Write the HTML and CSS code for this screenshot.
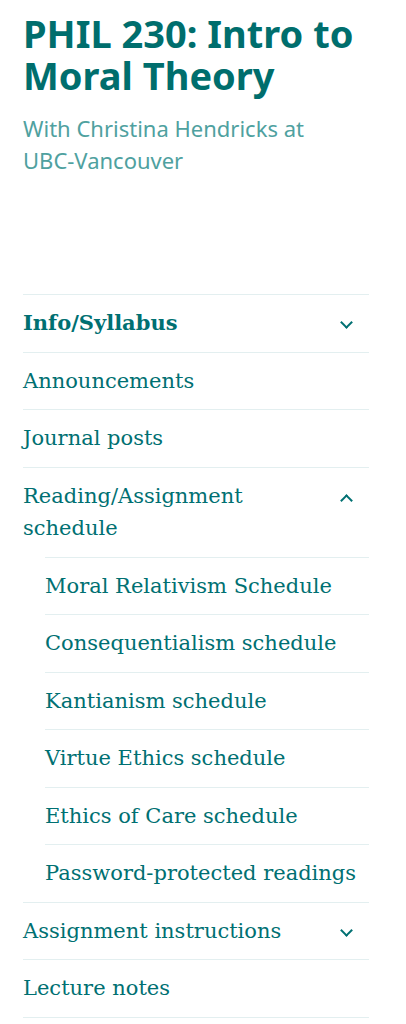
FILE: index.html
```html
<!DOCTYPE html>
<html lang="en">
<head>
  <meta charset="UTF-8" />
  <title>PHIL 230: Intro to Moral Theory</title>
  <link rel="stylesheet" href="styles.css">
</head>
<body>

<div class="site-sidebar">
  <header class="site-header">
    <h1 class="site-title">PHIL 230: Intro to Moral Theory</h1>
    <p class="site-desc">With Christina Hendricks at UBC-Vancouver</p>
  </header>

  <!-- Main menu -->
  <nav class="main-nav">
    <ul class="menu">
      <li class="menu-item current has-children">
        <a href="#">Info/Syllabus</a>
        <span class="toggle down"></span>
      </li>
      <li class="menu-item"><a href="#">Announcements</a></li>
      <li class="menu-item"><a href="#">Journal posts</a></li>
      <li class="menu-item has-children">
        <a href="#">Reading/Assignment schedule</a>
        <span class="toggle up"></span>
        <ul class="sub-menu">
          <li class="menu-item"><a href="#">Moral Relativism Schedule</a></li>
          <li class="menu-item"><a href="#">Consequentialism schedule</a></li>
          <li class="menu-item"><a href="#">Kantianism schedule</a></li>
          <li class="menu-item"><a href="#">Virtue Ethics schedule</a></li>
          <li class="menu-item"><a href="#">Ethics of Care schedule</a></li>
          <li class="menu-item"><a href="#">Password-protected readings</a></li>
        </ul>
      </li>
      <li class="menu-item has-children">
        <a href="#">Assignment instructions</a>
        <span class="toggle down"></span>
      </li>
      <li class="menu-item"><a href="#">Lecture notes</a></li>
    </ul>
  </nav>
</div>

</body>
</html>
```

FILE: styles.css
```css
:root {
  --main-color: #006e6d;
  --link-color: #007072;
  --desc-color: #4fa19f;
  --line-color: #e3eff0;
}

body {
  margin: 0;
  padding: 0;
  background: #fff;
}

.site-sidebar {
  padding: 0 37px 0 23px;
}

.site-header {
  padding-top: 12px;
  margin-bottom: 118px;
}

.site-title {
  font-family: "Noto Sans", sans-serif;
  font-weight: 700;
  font-size: 38px;
  line-height: 42px;
  color: var(--main-color);
  margin: 0;
}

.site-desc {
  font-family: "Noto Sans", sans-serif;
  font-size: 22px;
  line-height: 32px;
  color: var(--desc-color);
  margin: 16px 0 0;
  padding-right: 24px;
}

.menu,
.sub-menu {
  list-style: none;
  margin: 0;
  padding: 0;
}

.menu {
  border-bottom: 1px solid var(--line-color);
}

.menu-item {
  position: relative;
  border-top: 1px solid var(--line-color);
}

.menu-item a {
  display: block;
  padding: 12px 0;
  font-family: "DejaVu Serif", serif;
  font-size: 21px;
  line-height: 32.5px;
  color: var(--link-color);
  text-decoration: none;
}

.menu-item.has-children > a {
  padding-right: 60px;
}

.menu-item.current > a {
  font-weight: 700;
}

.sub-menu {
  margin-left: 22px;
}

.toggle {
  position: absolute;
  top: 23px;
  right: 18px;
  width: 7px;
  height: 7px;
  border-right: 2px solid var(--link-color);
  border-bottom: 2px solid var(--link-color);
}

.toggle.down {
  transform: rotate(45deg);
}

.toggle.up {
  top: 28px;
  transform: rotate(-135deg);
}
```
